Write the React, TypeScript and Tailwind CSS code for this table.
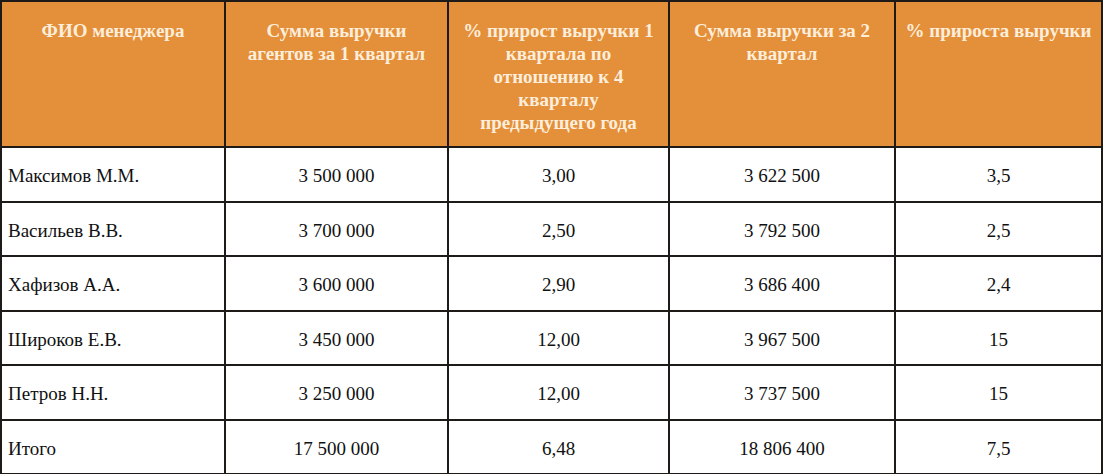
const headers = [
  "ФИО менеджера",
  "Сумма выручки агентов за 1 квартал",
  "% прирост выручки 1 квартала по отношению к 4 кварталу\nпредыдущего года",
  "Сумма выручки за 2 квартал",
  "% прироста выручки",
];

const rows = [
  ["Максимов М.М.", "3 500 000", "3,00", "3 622 500", "3,5"],
  ["Васильев В.В.", "3 700 000", "2,50", "3 792 500", "2,5"],
  ["Хафизов А.А.", "3 600 000", "2,90", "3 686 400", "2,4"],
  ["Широков Е.В.", "3 450 000", "12,00", "3 967 500", "15"],
  ["Петров Н.Н.", "3 250 000", "12,00", "3 737 500", "15"],
  ["Итого", "17 500 000", "6,48", "18 806 400", "7,5"],
];

const widths = ["w-[224px]", "w-[223px]", "w-[221px]", "w-[226px]", "w-[207px]"];

export default function App() {
  return (
    <div className="min-h-screen bg-white font-['Liberation_Serif',serif]">
      <table className="w-[1101px] table-fixed border-collapse">
        <colgroup>
          {widths.map((w) => (
            <col key={w} className={w} />
          ))}
        </colgroup>
        <thead>
          <tr className="h-[146px] bg-[#e48f3a]">
            {headers.map((h) => (
              <th
                key={h}
                className="whitespace-pre-line border-2 border-[#1e1a17] px-2 pt-[17px] align-top text-center text-[19px] font-bold leading-[23px] text-[#fdeedb]"
              >
                {h}
              </th>
            ))}
          </tr>
        </thead>
        <tbody>
          {rows.map((row) => (
            <tr key={row[0]} className="h-[54.5px]">
              {row.map((cell, i) => (
                <td
                  key={i}
                  className={
                    "border-2 border-[#1e1a17] px-1.5 pt-1 align-middle text-[19px] text-[#111] " +
                    (i === 0 ? "text-left" : "text-center")
                  }
                >
                  {cell}
                </td>
              ))}
            </tr>
          ))}
        </tbody>
      </table>
    </div>
  );
}
